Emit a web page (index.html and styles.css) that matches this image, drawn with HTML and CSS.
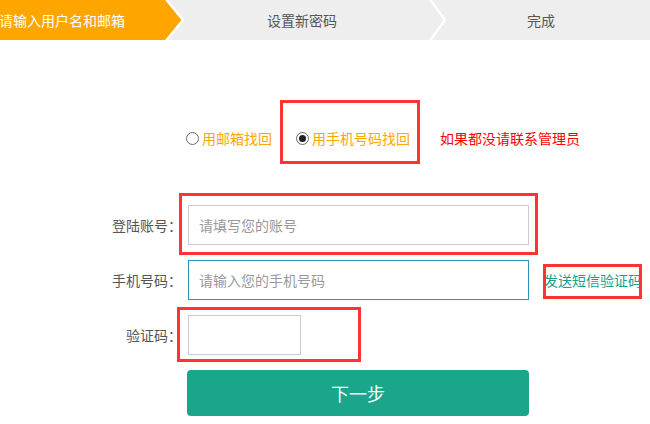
FILE: index.html
```html
<!DOCTYPE html>
<html lang="zh">
<head>
<meta charset="utf-8">
<title>找回密码</title>
<link rel="stylesheet" href="styles.css">
</head>
<body>
<div class="steps">
  <svg class="steps-bg" width="650" height="40" viewBox="0 0 650 40">
    <rect x="0" y="0" width="650" height="40" fill="#eeeeee"/>
    <polygon points="-2,-2 165,-2 183,20 165,42 -2,42" fill="#ffa500" stroke="#ffffff" stroke-width="2.5"/>
    <polyline points="429,-2 445,20 429,42" fill="none" stroke="#ffffff" stroke-width="2.5"/>
  </svg>
  <div class="steps-text">
    <span class="step step-1">请输入用户名和邮箱</span>
    <span class="step step-2">设置新密码</span>
    <span class="step step-3">完成</span>
  </div>
</div>

<div class="page">
  <div class="radios">
    <span class="radio"></span><span class="opt">用邮箱找回</span>
    <span class="radio radio-on"></span><span class="opt">用手机号码找回</span>
    <span class="warn">如果都没请联系管理员</span>
  </div>

  <div class="row">
    <label class="label">登陆账号：</label>
    <div class="input">请填写您的账号</div>
  </div>
  <div class="row">
    <label class="label">手机号码：</label>
    <div class="input input-focus">请输入您的手机号码</div>
    <span class="send">发送短信验证码</span>
  </div>
  <div class="row">
    <label class="label">验证码：</label>
    <div class="input input-short"></div>
  </div>
  <div class="btn">下一步</div>

  <div class="mark mark-1"></div>
  <div class="mark mark-2"></div>
  <div class="mark mark-3"></div>
  <div class="mark mark-4"></div>
</div>
</body>
</html>
```
FILE: styles.css
```css
html, body {
  margin: 0;
  padding: 0;
  background: #ffffff;
  font-family: "Noto Sans CJK SC", "Noto Sans", sans-serif;
  font-size: 14px;
  overflow: hidden;
}

.steps {
  display: grid;
  width: 650px;
  height: 40px;
}
.steps-bg, .steps-text {
  grid-area: 1 / 1;
}
.steps-bg { display: block; }
.steps-text {
  display: flex;
  align-items: center;
  height: 40px;
  line-height: 20px;
  color: #555555;
}
.step-1 {
  color: #ffffff;
  margin-left: -1px;
}
.step-2 {
  margin-left: 142px;
}
.step-3 {
  margin-left: 190px;
}

.page {
  position: relative;
  height: 384px;
}

.radios {
  display: flex;
  align-items: center;
  height: 20px;
  line-height: 20px;
  padding-top: 88px;
  padding-left: 186px;
}
.radio {
  box-sizing: border-box;
  width: 13px;
  height: 13px;
  border: 1px solid #6b6b6b;
  border-radius: 50%;
  display: flex;
  align-items: center;
  justify-content: center;
  margin-right: 3px;
}
.radio-on {
  margin-left: 24px;
}
.radio-on::after {
  content: "";
  width: 7px;
  height: 7px;
  border-radius: 50%;
  background: #222222;
}
.opt {
  color: #ffa500;
}
.warn {
  color: #ff0000;
  margin-left: 30px;
}

.row {
  display: flex;
  align-items: center;
  height: 40px;
  margin-top: 15px;
}
.radios + .row {
  margin-top: 57px;
}
.label {
  width: 182px;
  text-align: right;
  color: #555555;
  line-height: 20px;
}
.input {
  box-sizing: border-box;
  width: 341px;
  height: 40px;
  margin-left: 6px;
  border: 1px solid #cccccc;
  padding-left: 10px;
  line-height: 38px;
  color: #999999;
}
.input-focus {
  border-color: #2b93bb;
}
.input-short {
  width: 113px;
}
.send {
  margin-left: 15px;
  color: #1aa08a;
  line-height: 20px;
}

.btn {
  box-sizing: border-box;
  width: 342px;
  height: 46px;
  margin-top: 15px;
  margin-left: 187px;
  border-radius: 4px;
  background: #19a68b;
  color: #ffffff;
  font-size: 18px;
  line-height: 46px;
  text-align: center;
}

.mark {
  position: absolute;
  box-sizing: border-box;
  border: 3px solid #ff3333;
}
.mark-1 { left: 280px; top: 60px;  width: 140px; height: 64px; }
.mark-2 { left: 179px; top: 153px; width: 359px; height: 62px; }
.mark-3 { left: 543px; top: 224px; width: 99px;  height: 35px; }
.mark-4 { left: 177px; top: 267px; width: 184px; height: 55px; }
```
